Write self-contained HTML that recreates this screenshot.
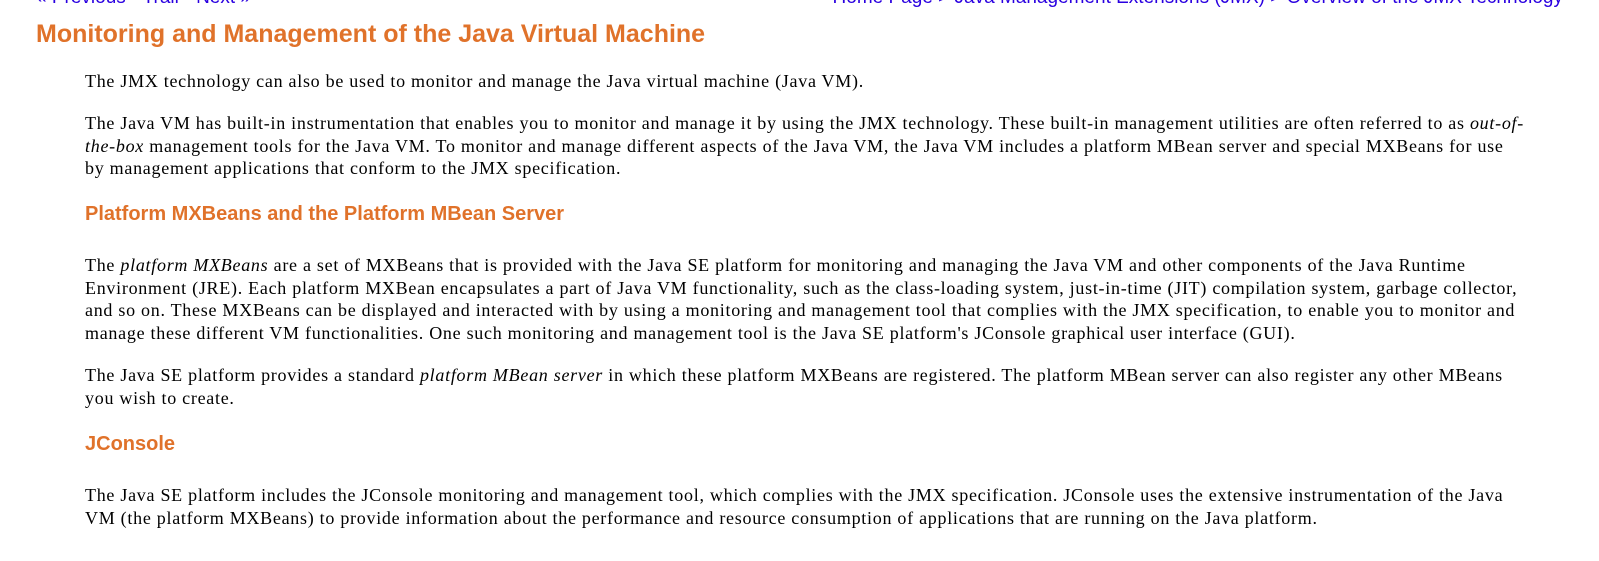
<!DOCTYPE html>
<html><head><meta charset="utf-8"><style>
body{margin:0;background:#fff;width:1599px;height:561px;overflow:hidden;position:relative}
.nav{position:absolute;top:-13px;font:19px "Liberation Sans",Arial,sans-serif;color:#2a00e0;white-space:nowrap}
h1{position:absolute;left:36px;top:20px;margin:0;font:bold 25px "Liberation Sans",Arial,sans-serif;color:#e0722a}
.c{position:absolute;left:85px;width:1440px;font:18px/22.5px "Liberation Serif","Times New Roman",serif;letter-spacing:0.72px;color:#000}
.c p{margin:0}
h3{position:absolute;left:85px;margin:0;font:bold 20px "Liberation Sans",Arial,sans-serif;color:#e0722a}
</style></head><body>
<div class="nav" style="left:36px">« Previous • Trail • Next »</div>
<div class="nav" style="right:36px">Home Page &gt; Java Management Extensions (JMX) &gt; Overview of the JMX Technology</div>
<h1>Monitoring and Management of the Java Virtual Machine</h1>
<div class="c" style="top:70px"><p>The JMX technology can also be used to monitor and manage the Java virtual machine (Java VM).</p></div>
<div class="c" style="top:112px"><p>The Java VM has built-in instrumentation that enables you to monitor and manage it by using the JMX technology. These built-in management utilities are often referred to as <i>out-of-the-box</i> management tools for the Java VM. To monitor and manage different aspects of the Java VM, the Java VM includes a platform MBean server and special MXBeans for use by management applications that conform to the JMX specification.</p></div>
<h3 style="top:203px">Platform MXBeans and the Platform MBean Server</h3>
<div class="c" style="top:254px"><p>The <i>platform MXBeans</i> are a set of MXBeans that is provided with the Java SE platform for monitoring and managing the Java VM and other components of the Java Runtime Environment (JRE). Each platform MXBean encapsulates a part of Java VM functionality, such as the class-loading system, just-in-time (JIT) compilation system, garbage collector, and so on. These MXBeans can be displayed and interacted with by using a monitoring and management tool that complies with the JMX specification, to enable you to monitor and manage these different VM functionalities. One such monitoring and management tool is the Java SE platform's JConsole graphical user interface (GUI).</p></div>
<div class="c" style="top:364px"><p>The Java SE platform provides a standard <i>platform MBean server</i> in which these platform MXBeans are registered. The platform MBean server can also register any other MBeans you wish to create.</p></div>
<h3 style="top:433px">JConsole</h3>
<div class="c" style="top:484px"><p>The Java SE platform includes the JConsole monitoring and management tool, which complies with the JMX specification. JConsole uses the extensive instrumentation of the Java VM (the platform MXBeans) to provide information about the performance and resource consumption of applications that are running on the Java platform.</p></div>
</body></html>
